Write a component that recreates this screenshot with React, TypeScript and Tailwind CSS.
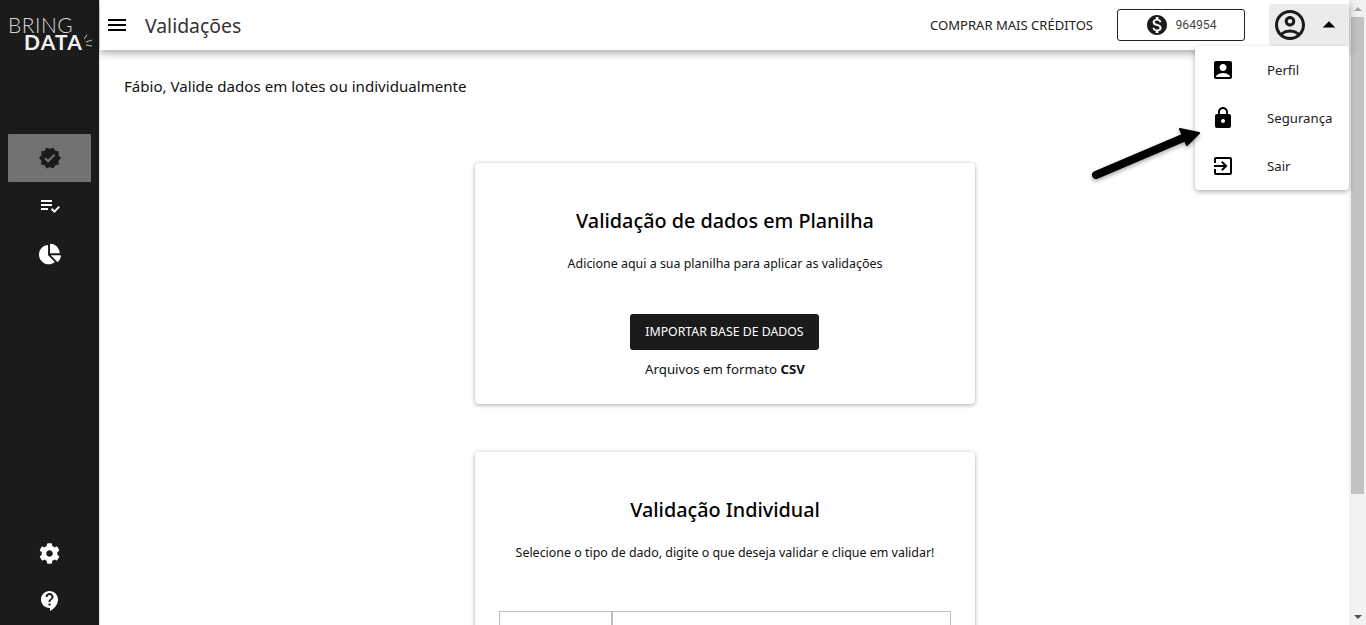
import { FaChartPie, FaCog } from 'react-icons/fa';
import {
  MdAccountBox,
  MdArrowDropUp,
  MdContactSupport,
  MdExitToApp,
  MdLock,
  MdMenu,
  MdMonetizationOn,
  MdOutlineAccountCircle,
  MdPlaylistAddCheck,
  MdVerified,
} from 'react-icons/md';

const font = 'font-["Noto_Sans",sans-serif]';

const Logo = () => (
  <div className="h-[50px] w-[99px] shrink-0 pt-[17px] font-['Lato',sans-serif]">
    <div className="ml-2 text-[21px] font-light leading-[15px] tracking-[0.5px] text-[#d4d4d4]">BRING</div>
    <div className="relative ml-6 mt-[2px] text-[21px] font-bold leading-[15px] tracking-[1.2px] text-[#f2f2f2]">
      DATA
      <svg className="absolute left-[59px] top-0" width="10" height="16" viewBox="0 0 10 16" stroke="#c4c4c4" strokeWidth="1">
        <path d="M1 5 L4 1 M3 8 L9 6 M3 11 L9 12" />
      </svg>
    </div>
  </div>
);

const Sidebar = () => (
  <aside className="flex w-[100px] shrink-0 flex-col items-center border-r border-[#e6e6e6] bg-[#1b1b1b] text-white">
    <Logo />
    <nav className="mt-[84px] flex w-full flex-col items-center px-2">
      <div className="flex h-12 w-full items-center justify-center rounded-[1px] bg-[#727272] text-[#1b1b1b]">
        <MdVerified size={24} />
      </div>
      <div className="flex h-12 w-full items-center justify-center">
        <MdPlaylistAddCheck size={24} />
      </div>
      <div className="flex h-12 w-full items-center justify-center">
        <FaChartPie size={22} />
      </div>
    </nav>
    <div className="mt-auto flex w-full flex-col items-center">
      <div className="flex h-12 w-full items-center justify-center">
        <FaCog size={21} />
      </div>
      <div className="flex h-12 w-full items-center justify-center">
        <MdContactSupport size={24} />
      </div>
    </div>
  </aside>
);

const Header = () => (
  <header className={`relative z-10 flex h-[50px] shrink-0 items-center bg-white pl-[5px] shadow-[0_3px_8px_rgba(0,0,0,0.35)] ${font}`}>
    <MdMenu size={24} className="text-black" />
    <h1 className="ml-[16px] mt-[2px] text-[19.4px] text-[#333]">Validações</h1>
    <div className="ml-auto flex items-center">
      <a className="mt-[1px] text-[13.05px] text-[#222]">COMPRAR MAIS CRÉDITOS</a>
      <div className="ml-6 flex h-8 w-[128px] items-center justify-center gap-[6px] rounded-[3px] border border-[#222]">
        <MdMonetizationOn size={24} className="text-[#1b1b1b]" />
        <span className="font-['Roboto',sans-serif] text-[12.2px] text-[#444]">964954</span>
      </div>
      <div className="ml-6 flex h-[42px] w-[80px] items-center rounded-[3px] bg-[#ebebeb] pl-[3px]">
        <MdOutlineAccountCircle size={36} className="text-[#1b1b1b]" />
        <MdArrowDropUp size={30} className="ml-[6px] text-black" />
      </div>
    </div>
  </header>
);

const UserMenu = () => (
  <div className={`absolute right-0 top-[46px] z-20 flex w-[154px] flex-col rounded-[4px] bg-white shadow-[0_2px_5px_rgba(0,0,0,0.3)] ${font}`}>
    {[
      { label: 'Perfil', icon: <MdAccountBox size={24} /> },
      { label: 'Segurança', icon: <MdLock size={24} /> },
      { label: 'Sair', icon: <MdExitToApp size={24} /> },
    ].map((item) => (
      <div key={item.label} className="flex h-12 items-center pl-[16px] text-black">
        {item.icon}
        <span className="ml-[32px] mt-[1px] text-[13.2px] text-[#222]">{item.label}</span>
      </div>
    ))}
  </div>
);

// seta desenhada por cima do print
const Arrow = () => (
  <svg
    className="absolute left-[985px] top-[120px] z-30 drop-shadow-[0_2px_2px_rgba(0,0,0,0.35)]"
    width="125"
    height="65"
    viewBox="0 0 125 65"
  >
    <g fill="#000" stroke="#000" strokeLinecap="round" strokeLinejoin="round">
      <path d="M11 55 L98 18" strokeWidth="8" fill="none" />
      <path d="M95 9 L114 13 L102 25 Z" strokeWidth="2" />
    </g>
  </svg>
);

const Card = ({ title, subtitle, children }: { title: string; subtitle: string; children: React.ReactNode }) => (
  <section className="flex w-[500px] shrink-0 flex-col items-center rounded-[4px] bg-white px-6 pt-[44px] pb-[25px] shadow-[0_1px_4px_rgba(0,0,0,0.35)]">
    <h2 className="text-[19.8px] font-medium leading-7 text-black">{title}</h2>
    <p className="mt-[21px] text-[12.43px] leading-4 text-[#111]">{subtitle}</p>
    {children}
  </section>
);

export default function App() {
  return (
    <div className="flex h-[625px] w-full overflow-hidden bg-white">
      <Sidebar />
      <div className="relative flex min-w-0 flex-1 flex-col">
        <Header />
        <UserMenu />
        <Arrow />
        <main className={`flex flex-1 flex-col ${font}`}>
          <p className="ml-6 mt-[25px] text-[15.1px] leading-[22px] text-[#111]">
            Fábio, Valide dados em lotes ou individualmente
          </p>
          <div className="mt-[66px] flex flex-col items-center gap-12 pl-px">
            <Card title="Validação de dados em Planilha" subtitle="Adicione aqui a sua planilha para aplicar as validações">
              <button className="mr-px mt-[42px] flex h-9 w-[189px] items-center justify-center rounded-[3px] bg-[#1b1b1b] text-[12.3px] text-white">
                IMPORTAR BASE DE DADOS
              </button>
              <p className="mt-[9px] text-[13.25px] leading-[20px] text-[#111]">
                Arquivos em formato <b className="font-bold">CSV</b>
              </p>
            </Card>
            <Card title="Validação Individual" subtitle="Selecione o tipo de dado, digite o que deseja validar e clique em validar!">
              <div className="mt-[50px] flex h-20 w-[452px] border border-[#bdbdbd]">
                <div className="w-[113px] border-r-2 border-[#bdbdbd]" />
                <div className="flex-1" />
              </div>
            </Card>
          </div>
        </main>
      </div>
      <div className="flex w-[17px] shrink-0 flex-col items-center bg-[#f1f1f1]">
        <div className="flex h-[17px] w-full items-center justify-center">
          <div className="h-0 w-0 border-x-[4px] border-b-[4px] border-x-transparent border-b-[#a3a3a3]" />
        </div>
        <div className="h-[477px] w-[13px] bg-[#c1c1c1]" />
        <div className="mt-auto flex h-[17px] w-full items-center justify-center">
          <div className="h-0 w-0 border-x-[4px] border-t-[4px] border-x-transparent border-t-[#505050]" />
        </div>
      </div>
    </div>
  );
}
